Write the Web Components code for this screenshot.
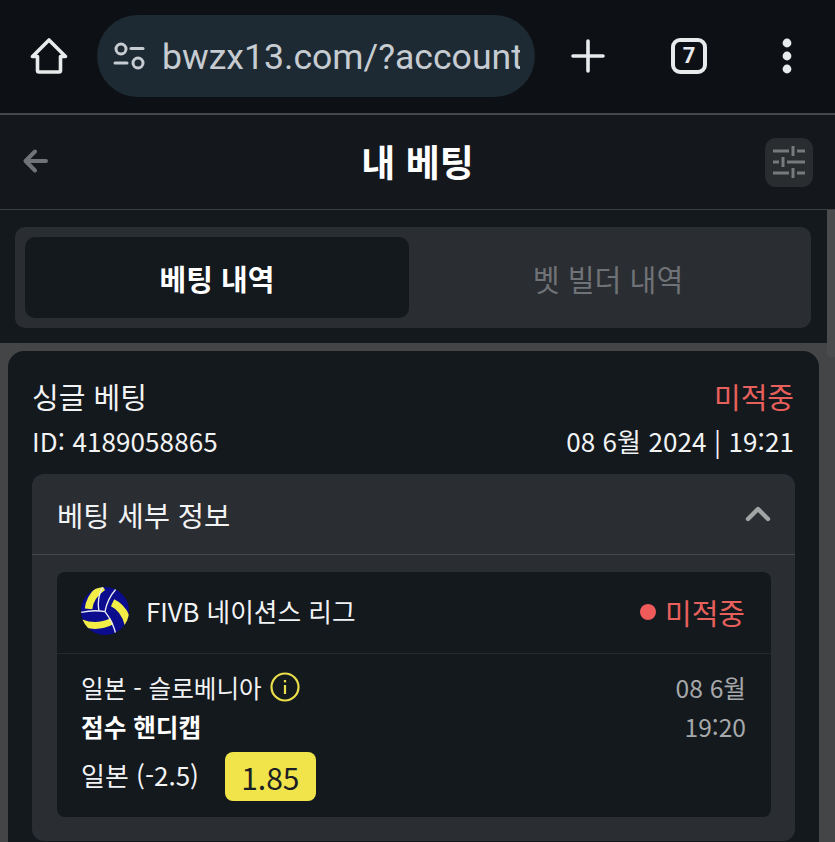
<!DOCTYPE html>
<html lang="ko">
<head>
<meta charset="utf-8">
<title>내 베팅</title>
<style>
    html, body {
        margin: 0;
        height: 842px;
        overflow: hidden;
        background: #444546;
    }
    body {
        font-family: "Noto Sans CJK KR", "Noto Sans", sans-serif;
        color: #f2f3f4;
    }
</style>
</head>
<body>
<browser-bar url="bwzx13.com/?account" tabs="7"></browser-bar>
<page-header title="내 베팅"></page-header>
<bet-tabs></bet-tabs>
<bet-card>
    <bet-details>
        <bet-event></bet-event>
    </bet-details>
</bet-card>
<script>
class BrowserBar extends HTMLElement {
    constructor() {
        super();
        this.attachShadow({ mode: 'open' });
    }

    connectedCallback() {
        this.shadowRoot.innerHTML = `
            <style>
                :host {
                    display: flex;
                    align-items: center;
                    box-sizing: content-box;
                    height: 111px;
                    padding-bottom: 2px;
                    background: #0d1116;
                    border-bottom: 2px solid #46494c;
                }
                .btn {
                    display: flex;
                    align-items: center;
                    justify-content: center;
                    height: 100%;
                }
                .home { width: 97px; }
                .new { width: 106px; }
                .count { width: 96px; }
                .more { width: 98px; }
                .more svg { margin-left: 1px; }
                .pill {
                    display: flex;
                    align-items: center;
                    gap: 15px;
                    box-sizing: border-box;
                    width: 438px;
                    height: 82px;
                    padding: 0 15px 0 16px;
                    background: #1e2a33;
                    border-radius: 41px;
                }
                .url {
                    flex: 1;
                    overflow: hidden;
                    white-space: nowrap;
                    padding-top: 3px;
                    font: 400 35.6px "Roboto", sans-serif;
                    color: #c6ccd1;
                }
                .tab-box {
                    display: flex;
                    align-items: center;
                    justify-content: center;
                    box-sizing: border-box;
                    width: 36px;
                    height: 36px;
                    border: 4px solid #e8eaec;
                    border-radius: 9px;
                    font: 700 22px "Roboto", sans-serif;
                    color: #e8eaec;
                }
                svg { display: block; }
            </style>
            <div class="btn home">
                <svg width="38" height="38" viewBox="0 0 38 38" fill="none" stroke="#e8eaec" stroke-width="3.6" stroke-linejoin="round" stroke-linecap="round">
                    <path d="M19 3 L2.5 19.5 H7.5 V33.5 Q7.5 35 9 35 H29 Q30.5 35 30.5 33.5 V19.5 H35.5 Z"/>
                </svg>
            </div>
            <div class="pill">
                <svg width="34" height="28" viewBox="0 0 34 28" fill="none" stroke="#c6ccd1" stroke-width="3" stroke-linecap="round">
                    <circle cx="8" cy="7" r="5"/>
                    <path d="M18 6.5 H30"/>
                    <path d="M2 21 H14"/>
                    <circle cx="25" cy="21" r="5"/>
                </svg>
                <span class="url">${this.getAttribute('url')}</span>
            </div>
            <div class="btn new">
                <svg width="34" height="34" viewBox="0 0 34 34" stroke="#e8eaec" stroke-width="3.6" stroke-linecap="round">
                    <path d="M17 2 V32 M2 17 H32"/>
                </svg>
            </div>
            <div class="btn count"><div class="tab-box">${this.getAttribute('tabs')}</div></div>
            <div class="btn more">
                <svg width="12" height="36" viewBox="0 0 12 36" fill="#e8eaec">
                    <circle cx="6" cy="5" r="4.4"/>
                    <circle cx="6" cy="18" r="4.4"/>
                    <circle cx="6" cy="31" r="4.4"/>
                </svg>
            </div>
        `;
    }
}

class PageHeader extends HTMLElement {
    constructor() {
        super();
        this.attachShadow({ mode: 'open' });
    }

    connectedCallback() {
        this.shadowRoot.innerHTML = `
            <style>
                :host {
                    display: flex;
                    align-items: center;
                    justify-content: space-between;
                    box-sizing: border-box;
                    height: 95px;
                    padding: 0 22px;
                    background: #14181d;
                    border-bottom: 1px solid #3c3f42;
                }
                h1 {
                    margin: 0 0 2px;
                    font-size: 37px;
                    font-weight: 700;
                    color: #fff;
                }
                .back {
                    width: 48px;
                    margin-bottom: 2px;
                }
                .filter {
                    display: flex;
                    align-items: center;
                    justify-content: center;
                    width: 48px;
                    height: 49px;
                    background: #2a2d30;
                    border-radius: 11px;
                }
                svg { display: block; }
            </style>
            <div class="back">
                <svg width="28" height="28" viewBox="0 0 28 28" fill="none" stroke="#717477" stroke-width="4" stroke-linejoin="round" stroke-linecap="round">
                    <path d="M24 14 H4 M13 4.5 L3.5 14 L13 23.5"/>
                </svg>
            </div>
            <h1>${this.getAttribute('title')}</h1>
            <div class="filter">
                <svg width="32" height="32" viewBox="0 0 32 32" fill="none" stroke="#77797c" stroke-width="3">
                    <path d="M0 5 H16 M24 5 H32 M20 0 V10"/>
                    <path d="M0 16 H6 M14 16 H32 M10 11 V21"/>
                    <path d="M0 27 H16 M24 27 H32 M20 22 V32"/>
                </svg>
            </div>
        `;
    }
}

class BetTabs extends HTMLElement {
    constructor() {
        super();
        this.attachShadow({ mode: 'open' });
    }

    connectedCallback() {
        this.shadowRoot.innerHTML = `
            <style>
                :host {
                    display: block;
                    position: relative;
                    box-sizing: border-box;
                    height: 133px;
                    padding: 17px 16px 15px 15px;
                    margin-right: 8px;
                    background: #14191e;
                }
                .box {
                    display: flex;
                    box-sizing: border-box;
                    height: 101px;
                    padding: 10px;
                    background: #2a2d32;
                    border-radius: 10px;
                }
                .tab {
                    flex: 1;
                    display: flex;
                    align-items: center;
                    justify-content: center;
                    padding-left: 6px;
                    font-size: 29.2px;
                    color: #6f7276;
                }
                .tab.on {
                    flex: 0 0 384px;
                    padding-left: 0;
                    font-size: 29px;
                    background: #14191e;
                    border-radius: 10px;
                    color: #fff;
                    font-weight: 700;
                }
                .thumb {
                    position: absolute;
                    top: 0;
                    right: -8px;
                    width: 8px;
                    height: 147px;
                    background: #4a4b4c;
                    border-radius: 0 0 0 4px;
                }
            </style>
            <div class="box">
                <div class="tab on">베팅 내역</div>
                <div class="tab">벳 빌더 내역</div>
            </div>
            <div class="thumb"></div>
        `;
    }
}

class BetCard extends HTMLElement {
    constructor() {
        super();
        this.attachShadow({ mode: 'open' });
    }

    connectedCallback() {
        this.shadowRoot.innerHTML = `
            <style>
                :host {
                    display: block;
                    box-sizing: border-box;
                    width: 811px;
                    margin: 8px 0 0 8px;
                    padding: 23px 25px 16px 24px;
                    background: #14191e;
                    border-radius: 16px;
                }
                .row {
                    display: flex;
                    align-items: center;
                    justify-content: space-between;
                    height: 44px;
                }
                .big { font-size: 29px; }
                .lost { font-size: 29px; color: #e8605c; }
                .meta { font-size: 26px; letter-spacing: 0.1px; }
                ::slotted(*) { margin: 12px -1px 0 0; }
            </style>
            <div class="row">
                <span class="big">싱글 베팅</span>
                <span class="lost">미적중</span>
            </div>
            <div class="row meta">
                <span>ID: 4189058865</span>
                <span>08 6월 2024 | 19:21</span>
            </div>
            <slot></slot>
        `;
    }
}

class BetDetails extends HTMLElement {
    constructor() {
        super();
        this.attachShadow({ mode: 'open' });
    }

    connectedCallback() {
        this.shadowRoot.innerHTML = `
            <style>
                :host {
                    display: block;
                    background: #2a2d32;
                    border-radius: 12px;
                }
                .head {
                    display: flex;
                    align-items: center;
                    justify-content: space-between;
                    box-sizing: border-box;
                    height: 81px;
                    padding: 0 24px 0 25px;
                    border-bottom: 1px solid #45474a;
                    font-size: 28.5px;
                }
                .body { padding: 17px 24px 24px 25px; }
                svg { display: block; }
            </style>
            <div class="head">
                <span>베팅 세부 정보</span>
                <svg width="26" height="16" viewBox="0 0 26 16" fill="none" stroke="#a2a4a6" stroke-width="4.4" stroke-linecap="round" stroke-linejoin="round">
                    <path d="M3 13 L13 3 L23 13"/>
                </svg>
            </div>
            <div class="body"><slot></slot></div>
        `;
    }
}

class BetEvent extends HTMLElement {
    constructor() {
        super();
        this.attachShadow({ mode: 'open' });
    }

    connectedCallback() {
        this.shadowRoot.innerHTML = `
            <style>
                :host {
                    display: block;
                    background: #14191e;
                    border-radius: 8px;
                }
                .head {
                    display: flex;
                    align-items: center;
                    box-sizing: border-box;
                    height: 82px;
                    padding: 0 26px 0 24px;
                    border-bottom: 1px solid #26292d;
                }
                .head svg { margin-bottom: 4px; }
                .league {
                    flex: 1;
                    margin: 0 0 4px 17px;
                    font-size: 25.7px;
                }
                .status {
                    display: flex;
                    align-items: center;
                    gap: 9px;
                    margin-bottom: 2px;
                    font-size: 29px;
                    color: #e8605c;
                }
                .dot {
                    width: 16px;
                    height: 16px;
                    border-radius: 50%;
                    background: #ef5b5b;
                }
                .body {
                    display: grid;
                    grid-template-columns: 1fr auto;
                    grid-template-rows: 37px 41px 55px;
                    align-items: center;
                    padding: 14px 25px 16px 24px;
                    font-size: 24.6px;
                }
                .teams { display: flex; align-items: center; gap: 8px; }
                .market { font-weight: 700; color: #fff; }
                .when { color: #a6a8aa; text-align: right; }
                .pick {
                    grid-column: 1 / -1;
                    align-self: end;
                    display: flex;
                    align-items: center;
                    gap: 26px;
                    font-size: 26px;
                }
                .pick .label { margin-top: -4px; }
                .odds {
                    display: flex;
                    align-items: center;
                    justify-content: center;
                    width: 91px;
                    height: 49px;
                    background: #f1e44a;
                    border-radius: 8px;
                    font-size: 30px;
                    color: #1b1f24;
                }
                svg { display: block; }
            </style>
            <div class="head">
                <svg width="48" height="48" viewBox="0 0 140 140">
                    <defs><clipPath id="ball"><circle cx="70" cy="70" r="70"/></clipPath></defs>
                    <g clip-path="url(#ball)" fill="none">
                        <rect width="140" height="140" fill="#0b0c8e"/>
                        <path d="M22 64 Q26 26 64 0" stroke="#f3ee45" stroke-width="22"/>
                        <path d="M92 46 Q126 62 138 108" stroke="#f3ee45" stroke-width="22"/>
                        <path d="M0 104 Q46 122 90 100" stroke="#f3ee45" stroke-width="20"/>
                        <g stroke="#e9ebf2" stroke-width="4">
                            <path d="M102 6 Q76 36 70 72"/>
                            <path d="M0 74 Q38 66 70 72"/>
                            <path d="M70 72 Q92 100 102 138"/>
                            <path d="M64 0 Q46 30 52 68"/>
                        </g>
                    </g>
                </svg>
                <span class="league">FIVB 네이션스 리그</span>
                <span class="status"><span class="dot"></span>미적중</span>
            </div>
            <div class="body">
                <div class="teams">
                    <span>일본 - 슬로베니아</span>
                    <svg width="30" height="30" viewBox="0 0 30 30" fill="none" stroke="#eadf4a" stroke-width="2.2">
                        <circle cx="15" cy="15" r="13.5"/>
                        <path d="M15 13 V22"/>
                        <path d="M15 8 V10.4"/>
                    </svg>
                </div>
                <div class="when">08 6월</div>
                <div class="market">점수 핸디캡</div>
                <div class="when">19:20</div>
                <div class="pick">
                    <span class="label">일본 (-2.5)</span>
                    <span class="odds">1.85</span>
                </div>
            </div>
        `;
    }
}

customElements.define('browser-bar', BrowserBar);
customElements.define('page-header', PageHeader);
customElements.define('bet-tabs', BetTabs);
customElements.define('bet-card', BetCard);
customElements.define('bet-details', BetDetails);
customElements.define('bet-event', BetEvent);
</script>
</body>
</html>
